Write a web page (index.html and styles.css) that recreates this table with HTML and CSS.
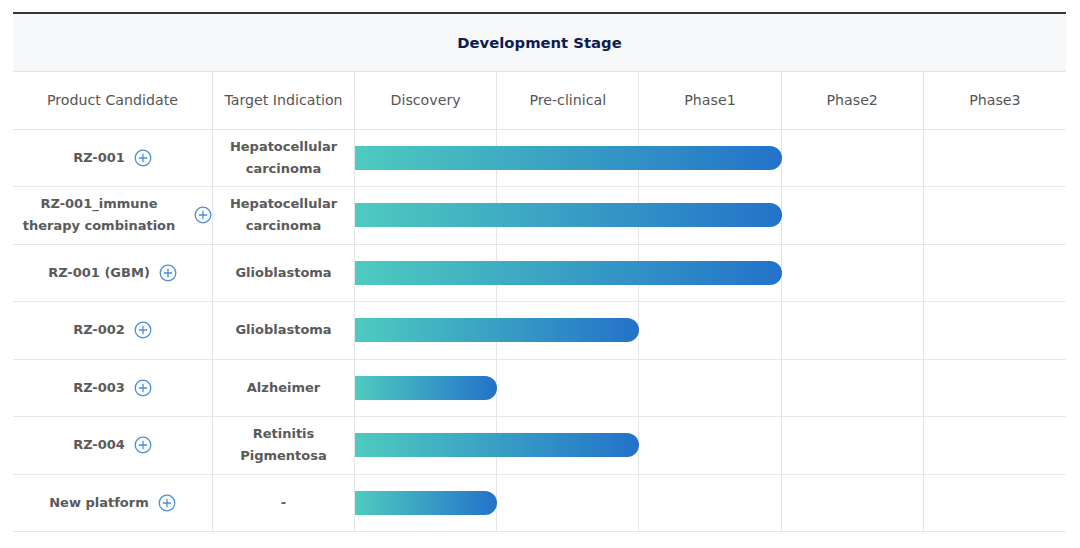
FILE: index.html
```html
<!DOCTYPE html>
<html lang="en">
<head>
<meta charset="utf-8">
<title>Development Stage</title>
<link rel="stylesheet" href="styles.css">
</head>
<body>
<div class="pipeline">
  <div class="title">Development Stage</div>
  <div class="row head">
    <div class="cell">Product Candidate</div>
    <div class="cell">Target Indication</div>
    <div class="cell">Discovery</div>
    <div class="cell">Pre-clinical</div>
    <div class="cell">Phase1</div>
    <div class="cell">Phase2</div>
    <div class="cell">Phase3</div>
  </div>

  <div class="row">
    <div class="cell product"><span class="name">RZ-001</span><svg class="plus" viewBox="0 0 18 18"><circle cx="9" cy="9" r="7.8"/><path d="M9 4.8v8.4M4.8 9h8.4"/></svg></div>
    <div class="cell target">Hepatocellular carcinoma</div>
    <div class="cell"></div><div class="cell"></div><div class="cell"></div><div class="cell"></div><div class="cell"></div>
    <div class="bar span-3"></div>
  </div>

  <div class="row">
    <div class="cell product"><span class="name">RZ-001_immune therapy combination</span><svg class="plus" viewBox="0 0 18 18"><circle cx="9" cy="9" r="7.8"/><path d="M9 4.8v8.4M4.8 9h8.4"/></svg></div>
    <div class="cell target">Hepatocellular carcinoma</div>
    <div class="cell"></div><div class="cell"></div><div class="cell"></div><div class="cell"></div><div class="cell"></div>
    <div class="bar span-3"></div>
  </div>

  <div class="row">
    <div class="cell product"><span class="name">RZ-001 (GBM)</span><svg class="plus" viewBox="0 0 18 18"><circle cx="9" cy="9" r="7.8"/><path d="M9 4.8v8.4M4.8 9h8.4"/></svg></div>
    <div class="cell target">Glioblastoma</div>
    <div class="cell"></div><div class="cell"></div><div class="cell"></div><div class="cell"></div><div class="cell"></div>
    <div class="bar span-3"></div>
  </div>

  <div class="row">
    <div class="cell product"><span class="name">RZ-002</span><svg class="plus" viewBox="0 0 18 18"><circle cx="9" cy="9" r="7.8"/><path d="M9 4.8v8.4M4.8 9h8.4"/></svg></div>
    <div class="cell target">Glioblastoma</div>
    <div class="cell"></div><div class="cell"></div><div class="cell"></div><div class="cell"></div><div class="cell"></div>
    <div class="bar span-2"></div>
  </div>

  <div class="row">
    <div class="cell product"><span class="name">RZ-003</span><svg class="plus" viewBox="0 0 18 18"><circle cx="9" cy="9" r="7.8"/><path d="M9 4.8v8.4M4.8 9h8.4"/></svg></div>
    <div class="cell target">Alzheimer</div>
    <div class="cell"></div><div class="cell"></div><div class="cell"></div><div class="cell"></div><div class="cell"></div>
    <div class="bar span-1"></div>
  </div>

  <div class="row">
    <div class="cell product"><span class="name">RZ-004</span><svg class="plus" viewBox="0 0 18 18"><circle cx="9" cy="9" r="7.8"/><path d="M9 4.8v8.4M4.8 9h8.4"/></svg></div>
    <div class="cell target">Retinitis Pigmentosa</div>
    <div class="cell"></div><div class="cell"></div><div class="cell"></div><div class="cell"></div><div class="cell"></div>
    <div class="bar span-2"></div>
  </div>

  <div class="row">
    <div class="cell product"><span class="name">New platform</span><svg class="plus" viewBox="0 0 18 18"><circle cx="9" cy="9" r="7.8"/><path d="M9 4.8v8.4M4.8 9h8.4"/></svg></div>
    <div class="cell target">-</div>
    <div class="cell"></div><div class="cell"></div><div class="cell"></div><div class="cell"></div><div class="cell"></div>
    <div class="bar span-1"></div>
  </div>
</div>
</body>
</html>
```
FILE: styles.css
```css
* { box-sizing: border-box; }

body {
  margin: 0;
  padding: 12px 14px 0 13px;
  background: #ffffff;
  font-family: "DejaVu Sans", "Open Sans", sans-serif;
  color: #555555;
}

.pipeline {
  width: 1053px;
  border-top: 2px solid #363636;
}

.title {
  height: 57.5px;
  background: #f7f8fa;
  border-bottom: 1px solid #e6e6e6;
  display: flex;
  align-items: center;
  justify-content: center;
  font-size: 14.8px;
  font-weight: 700;
  color: #0d1c4f;
}

.row {
  display: grid;
  grid-template-columns: 200px 142px repeat(5, minmax(0, 1fr));
  grid-template-rows: 56.5px;
  border-bottom: 1px solid #e6e6e6;
}

.row.head {
  grid-template-rows: 57px;
}

.cell {
  grid-row: 1;
  display: flex;
  align-items: center;
  justify-content: center;
  text-align: center;
  border-right: 1px solid #e6e6e6;
  font-size: 13px;
  line-height: 22px;
}

.cell:nth-child(1) { grid-column: 1; }
.cell:nth-child(2) { grid-column: 2; }
.cell:nth-child(3) { grid-column: 3; }
.cell:nth-child(4) { grid-column: 4; }
.cell:nth-child(5) { grid-column: 5; }
.cell:nth-child(6) { grid-column: 6; }
.cell:nth-child(7) { grid-column: 7; border-right: none; }

.head .cell {
  font-size: 14.2px;
  font-weight: 400;
  color: #555555;
}

.product {
  gap: 9px;
  font-weight: 700;
  color: #5a5a5a;
}

.target {
  padding: 0 12px;
  font-weight: 700;
  color: #5a5a5a;
}

.plus {
  flex: none;
  width: 18px;
  height: 18px;
  fill: none;
  stroke: #4a8fdf;
  stroke-width: 1.3;
}

.bar {
  grid-row: 1;
  grid-column-start: 3;
  align-self: center;
  height: 24px;
  border-radius: 0 12px 12px 0;
  background: linear-gradient(90deg, #4ecbbf 0%, #2372c9 100%);
}

.span-1 { grid-column-end: span 1; }
.span-2 { grid-column-end: span 2; }
.span-3 { grid-column-end: span 3; }
```
